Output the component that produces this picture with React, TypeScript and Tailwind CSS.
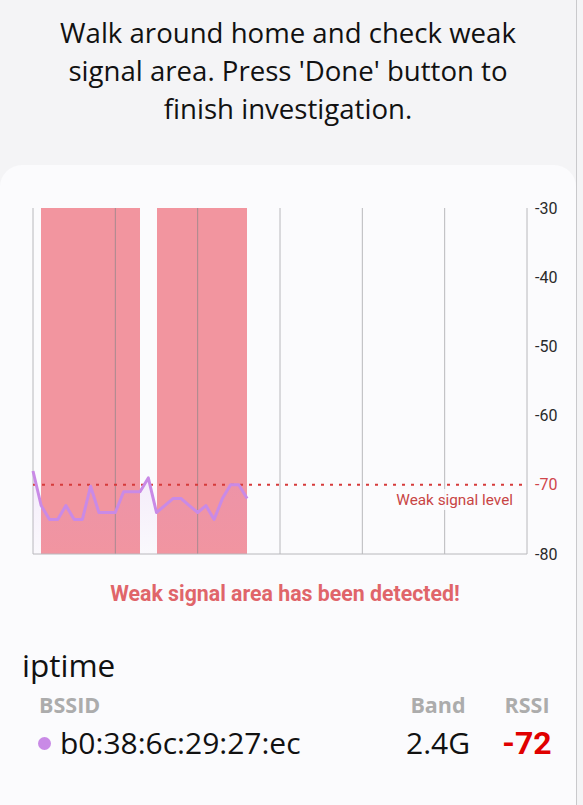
import React from "react";

const vals = [-68, -73, -75, -75, -73, -75, -75, -70.2, -74, -74, -74, -71, -71, -71, -69, -74, -73, -72, -72, -73, -74, -73, -75, -72, -70, -70, -72];
const L = 33;
const R = 527;
const T = 18;
const B = 364;
const yOf = (v: number) => T + (-30 - v) * ((B - T) / 50);
const step = (R - L) / 60;

function Chart() {
  const pts = vals.map((v, i) => [L + i * step, yOf(v)] as [number, number]);
  const line = pts.map((p) => `${p[0].toFixed(1)},${p[1].toFixed(1)}`).join(" ");
  const area = `${L},${B} ${line} ${pts[pts.length - 1][0].toFixed(1)},${B}`;
  const grid = [0, 1, 2, 3, 4, 5, 6].map((k) => L + k * ((R - L) / 6));
  const labels = [-30, -40, -50, -60, -70, -80];
  return (
    <svg width="577" height="372" viewBox="0 0 577 372" className="block">
      <defs>
        <linearGradient id="fillg" x1="0" y1="0" x2="0" y2="1">
          <stop offset="0%" stopColor="#c98ae6" stopOpacity="0.14" />
          <stop offset="100%" stopColor="#c98ae6" stopOpacity="0.02" />
        </linearGradient>
      </defs>
      <rect x={41} y={T} width={99} height={B - T} fill="#f2959f" />
      <rect x={157} y={T} width={90} height={B - T} fill="#f2959f" />
      {grid.map((x, i) => (
        <line key={i} x1={x} y1={T} x2={x} y2={B} stroke={i > 0 && i < 3 ? "#a88a8e" : "#b8b8bc"} strokeWidth="1" />
      ))}
      <line x1={L} y1={B} x2={R} y2={B} stroke="#b8b8bc" strokeWidth="1" />
      <polygon points={area} fill="url(#fillg)" />
      <line x1={L} y1={yOf(-70)} x2={R} y2={yOf(-70)} stroke="#d63b3b" strokeWidth="2" strokeDasharray="3 6" />
      <polyline points={line} fill="none" stroke="#c98ae6" strokeWidth="3" strokeLinejoin="round" />
      <rect x={390} y={299} width={127} height={21} fill="#fcfcfe" opacity="0.85" />
      <text x={513} y={315} textAnchor="end" fontSize="15.3" fill="#c84545" fontFamily="Roboto, sans-serif">
        Weak signal level
      </text>
      {labels.map((v) => (
        <text
          key={v}
          x={535}
          y={yOf(v) + 5.5}
          fontSize="16"
          fill={v === -70 ? "#d0454a" : "#2a2a2a"}
          fontFamily="Roboto, sans-serif"
        >
          {v}
        </text>
      ))}
    </svg>
  );
}

export default function App() {
  return (
    <div className="w-[583px] h-[805px] bg-[#f4f4f6] flex overflow-hidden">
      <div className="w-[577px] h-full border-r border-[#c9c9cc] flex flex-col">
        <div
          className="pt-[13px] text-center text-[27.6px] leading-[38px] text-[#111] whitespace-nowrap"
          style={{ fontFamily: "'Open Sans', Roboto, sans-serif" }}
        >
          Walk around home and check weak
          <br />
          signal area. Press 'Done' button to
          <br />
          finish investigation.
        </div>
        <div className="mt-[38px] flex-1 bg-[#fbfbfd] rounded-t-[22px] pt-[25px] flex flex-col" style={{ fontFamily: "'Open Sans', Roboto, sans-serif" }}>
          <Chart />
          <div
            className="mt-[20px] text-center text-[21.3px] leading-[24px] font-bold text-[#e0656a] pr-[6px]"
            style={{ fontFamily: "Roboto, sans-serif" }}
          >
            Weak signal area has been detected!
          </div>
          <div className="mt-[41px] pl-[22px] text-[31.5px] leading-[36px] text-[#111]">iptime</div>
          <div className="mt-[10px] pl-[39px] pr-[19px] flex items-center text-[21.5px] leading-[24px] font-bold text-[#acacac]">
            <div className="flex-1">BSSID</div>
            <div className="w-[70px] text-center">Band</div>
            <div className="w-[60px] ml-[24px] text-center">RSSI</div>
          </div>
          <div className="mt-[10px] pl-[38px] pr-[19px] flex items-center text-[30px] leading-[32px] text-[#111]">
            <div className="w-[13px] h-[13px] rounded-full bg-[#c98ae6] mr-[9px]" />
            <div className="flex-1">b0:38:6c:29:27:ec</div>
            <div className="w-[70px] text-center">2.4G</div>
            <div className="w-[60px] ml-[24px] text-center text-[32px] font-bold text-[#e00000]" style={{ fontFamily: "Roboto, sans-serif" }}>-72</div>
          </div>
        </div>
      </div>
    </div>
  );
}
